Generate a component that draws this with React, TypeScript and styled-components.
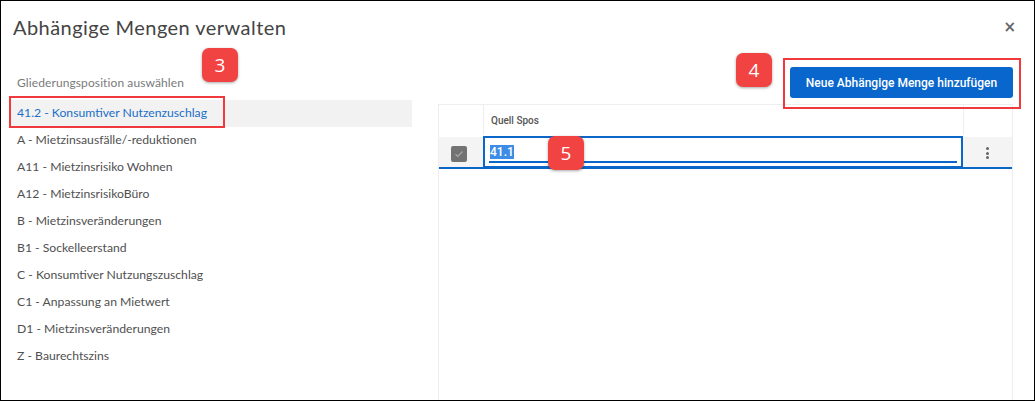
import React from "react";
import styled, {createGlobalStyle} from "styled-components";

const GlobalStyle = createGlobalStyle`
  html, body {
    margin: 0;
    padding: 0;
    width: 1035px;
    height: 401px;
    overflow: hidden;
    background: #fff;
  }
  * {
    box-sizing: border-box;
  }
`

const Dialog = styled.div`
  position: relative;
  width: 1035px;
  height: 401px;
  border: 1px solid #000;
  background: #fff;
  font-family: Lato, "Open Sans", sans-serif;
  display: flex;
  flex-direction: column;
`

const Header = styled.div`
  height: 50px;
  display: flex;
  align-items: flex-start;
  justify-content: space-between;
  padding: 14px 18px 0 12px;
`

const Title = styled.h1`
  margin: 0;
  font-size: 20px;
  font-weight: 400;
  color: #444;
  letter-spacing: 0.45px;
`

const Close = styled.span`
  margin-top: 5px;
  font-family: "DejaVu Sans", sans-serif;
  font-size: 15px;
  font-weight: 700;
  color: #666;
  line-height: 1;
`

const Body = styled.div`
  flex: 1;
  display: flex;
  gap: 26px;
  padding: 0 21px 0 9px;
  min-height: 0;
`

const Left = styled.div`
  width: 402px;
  display: flex;
  flex-direction: column;
`

const Label = styled.div`
  margin-top: 24px;
  margin-bottom: 9px;
  line-height: 16px;
  padding-left: 7px;
  font-size: 12px;
  color: #7a7a7a;
  letter-spacing: 0.1px;
`

const List = styled.ul`
  margin: 0;
  padding: 0;
  list-style: none;
`

const Item = styled.li<{active?: boolean}>`
  height: 27px;
  display: flex;
  align-items: center;
  padding: 0 0 3px 7px;
  font-size: 12.2px;
  color: ${p => (p.active ? "#1a6fc9" : "#505050")};
  background: ${p => (p.active ? "#f2f2f2" : "transparent")};
`

const Right = styled.div`
  flex: 1;
  display: flex;
  flex-direction: column;
`

const Toolbar = styled.div`
  display: flex;
  justify-content: flex-end;
  padding-top: 16px;
  margin-bottom: 6px;
`

const PrimaryButton = styled.button`
  height: 31px;
  width: 223px;
  border: none;
  border-radius: 3px;
  background: #0866cc;
  color: #fff;
  font-family: Roboto, sans-serif;
  font-weight: 500;
  font-size: 12px;
  padding: 0;
`

const Table = styled.div`
  flex: 1;
  border: 1px solid #eee;
  border-bottom: none;
  display: flex;
  flex-direction: column;
`

const Row = styled.div<{selected?: boolean}>`
  display: grid;
  grid-template-columns: 44px 1fr 49px;
  height: 32px;
  background: ${p => (p.selected ? "#f4f4f4" : "#fff")};
  border-bottom: 2px solid ${p => (p.selected ? "#0a66c8" : "transparent")};
`

const HeadCell = styled.div<{divider?: boolean}>`
  display: flex;
  align-items: center;
  padding-left: 7px;
  font-family: Roboto, sans-serif;
  font-size: 10px;
  font-weight: 500;
  color: #555;
  border-left: ${p => (p.divider ? "1px solid #eee" : "none")};
`

const Cell = styled.div<{center?: boolean}>`
  display: flex;
  align-items: center;
  justify-content: ${p => (p.center ? "center" : "flex-start")};
`

const Check = styled.span`
  width: 16px;
  height: 16px;
  border-radius: 2px;
  background: #737373;
  display: flex;
  align-items: center;
  justify-content: center;
  margin-left: 12px;
  margin-top: 2px;
`

const EditBox = styled.div`
  height: 32px;
  margin-top: -1px;
  border: 2px solid #0a66c8;
  background: #fff;
  padding: 0 4px;
  display: flex;
  flex-direction: column;
  justify-content: center;
`

const EditText = styled.div`
  height: 20px;
  display: flex;
  align-items: center;
  border-bottom: 2px solid #0a66c8;
  padding-left: 1px;
  margin-top: 2px;
`

const Selected = styled.span`
  background: #3d8ce6;
  color: #fff;
  font-family: Roboto, sans-serif;
  font-size: 12px;
  font-weight: 500;
  line-height: 14px;
`

const Kebab = styled.span`
  display: flex;
  flex-direction: column;
  gap: 1.5px;
  margin-top: 1px;
  & > i {
    width: 3px;
    height: 3px;
    border-radius: 50%;
    background: #666;
  }
`

const TableBody = styled.div`
  flex: 1;
`

const Badge = styled.div<{x: number; y: number}>`
  position: absolute;
  left: ${p => p.x}px;
  top: ${p => p.y}px;
  width: 36px;
  height: 34px;
  border-radius: 7px;
  background: #f24343;
  color: #fff;
  font-family: "Open Sans", sans-serif;
  font-size: 19px;
  display: flex;
  align-items: center;
  justify-content: center;
  box-shadow: 0 1px 3px rgba(0, 0, 0, 0.35);
`

const Frame = styled.div<{x: number; y: number; w: number; h: number}>`
  position: absolute;
  left: ${p => p.x}px;
  top: ${p => p.y}px;
  width: ${p => p.w}px;
  height: ${p => p.h}px;
  border: 2px solid #f0393c;
`

const items = [
  "A - Mietzinsausfälle/-reduktionen",
  "A11 - Mietzinsrisiko Wohnen",
  "A12 - MietzinsrisikoBüro",
  "B - Mietzinsveränderungen",
  "B1 - Sockelleerstand",
  "C - Konsumtiver Nutzungszuschlag",
  "C1 - Anpassung an Mietwert",
  "D1 - Mietzinsveränderungen",
  "Z - Baurechtszins",
];

const App = () => {
  return (
    <>
      <GlobalStyle/>
      <Dialog>
        <Header>
          <Title>Abhängige Mengen verwalten</Title>
          <Close>×</Close>
        </Header>
        <Body>
          <Left>
            <Label>Gliederungsposition auswählen</Label>
            <List>
              <Item active>41.2 - Konsumtiver Nutzenzuschlag</Item>
              {items.map(item => (
                <Item key={item}>{item}</Item>
              ))}
            </List>
          </Left>
          <Right>
            <Toolbar>
              <PrimaryButton>Neue Abhängige Menge hinzufügen</PrimaryButton>
            </Toolbar>
            <Table>
              <Row>
                <HeadCell/>
                <HeadCell divider>Quell Spos</HeadCell>
                <HeadCell divider/>
              </Row>
              <Row selected>
                <Cell>
                  <Check>
                    <svg width="10" height="8" viewBox="0 0 10 8">
                      <path d="M1.5 4.2 L3.8 6.3 L8.5 1.5" fill="none" stroke="#a8a8a8" strokeWidth="1.2"/>
                    </svg>
                  </Check>
                </Cell>
                <EditBox>
                  <EditText>
                    <Selected>41.1</Selected>
                  </EditText>
                </EditBox>
                <Cell center>
                  <Kebab><i/><i/><i/></Kebab>
                </Cell>
              </Row>
              <TableBody/>
            </Table>
          </Right>
        </Body>
        <Frame x={8} y={95} w={216} h={32}/>
        <Frame x={782} y={57} w={238} h={51}/>
        <Badge x={201} y={47}>3</Badge>
        <Badge x={735} y={52}>4</Badge>
        <Badge x={547} y={135}>5</Badge>
      </Dialog>
    </>
  )
}

export default App;
